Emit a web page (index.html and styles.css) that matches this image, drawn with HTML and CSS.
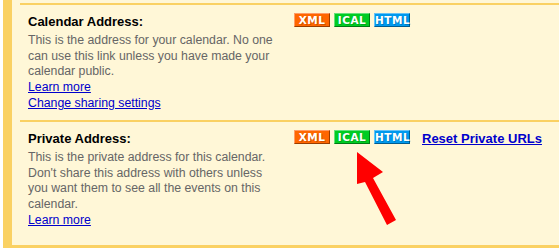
FILE: index.html
```html
<!DOCTYPE html>
<html lang="en">

<head>
    <meta charset="UTF-8">
    <title>Calendar Details</title>
    <link rel="stylesheet" href="styles.css">
</head>

<body>

    <div class="panel">
        <div class="row">
            <div class="info">
                <div class="label">Calendar Address:</div>
                <div class="desc">
                    This is the address for your calendar. No one can use this link unless you have made your calendar public.<br>
                    <a href="#">Learn more</a><br>
                    <a href="#">Change sharing settings</a>
                </div>
            </div>
            <div class="feeds">
                <span class="feed xml">XML</span>
                <span class="feed ical">ICAL</span>
                <span class="feed html">HTML</span>
            </div>
        </div>

        <div class="row">
            <div class="info">
                <div class="label">Private Address:</div>
                <div class="desc">
                    This is the private address for this calendar. Don't share this address with others unless you want them to see all the events on this calendar.<br>
                    <a href="#">Learn more</a>
                </div>
            </div>
            <div class="feeds">
                <span class="feed xml">XML</span>
                <span class="feed ical">ICAL</span>
                <span class="feed html">HTML</span>
                <a href="#" class="reset">Reset Private URLs</a>
            </div>
        </div>
    </div>

    <svg class="arrow" width="559" height="248" viewBox="0 0 559 248">
        <polygon points="357,152 383,172 373,178 396,220 387,225 365,182 357,184" fill="#ff0000" />
    </svg>

</body>

</html>
```

FILE: styles.css
```css
html {
    overflow: hidden;
}

body {
    margin: 0;
    background: #fff;
    font-family: "Liberation Sans", Arial, sans-serif;
    font-size: 13px;
}

.panel {
    margin-left: 3px;
    border-left: 9px solid #fad163;
    border-bottom: 3px solid #fad163;
    background: #fff7d7;
    padding: 3px 0 8px 8px;
}

.row {
    display: flex;
    border-top: 2px solid #fad163;
    padding: 9px 0 8.5px 8px;
}

.info {
    width: 250px;
    margin-right: 8px;
}

.label {
    font-weight: bold;
    line-height: 16px;
    color: #000;
    margin-bottom: 3px;
}

.desc {
    font-size: 12.3px;
    line-height: 15.7px;
    color: #666;
}

a {
    color: #0000cc;
}

.feeds {
    display: flex;
    align-items: flex-start;
    gap: 4px;
    padding-left: 8px;
}

.feed {
    display: block;
    box-sizing: border-box;
    width: 36px;
    height: 14px;
    margin-top: -1px;
    border: 1px solid;
    font-family: "DejaVu Sans", Verdana, sans-serif;
    font-size: 10.5px;
    font-weight: bold;
    letter-spacing: 0.5px;
    line-height: 12px;
    text-align: center;
    color: #fff;
    text-shadow: 1px 1px 0 rgba(0, 0, 0, 0.2);
}

.xml {
    background: #ff6600;
    border-color: #ff9c66 #993d00 #993d00 #ff9c66;
}

.ical {
    background: #00cc22;
    border-color: #66e07a #007a14 #007a14 #66e07a;
}

.html {
    background: #0099ee;
    border-color: #66c2f5 #005c8f #005c8f #66c2f5;
}

.reset {
    margin-left: 8px;
    line-height: 16px;
    font-weight: bold;
}

.arrow {
    position: absolute;
    left: 0;
    top: 0;
    pointer-events: none;
}
```
